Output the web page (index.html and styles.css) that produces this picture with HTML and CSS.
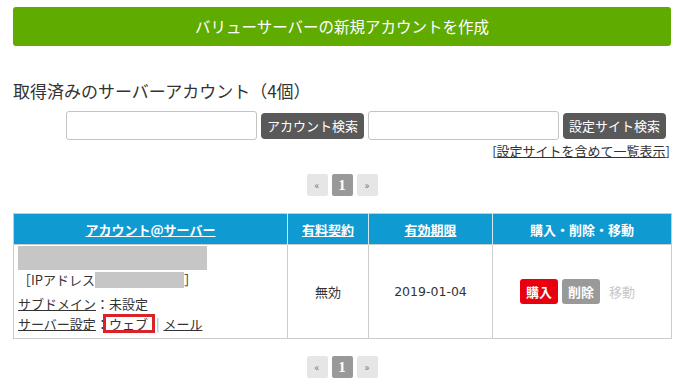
FILE: index.html
```html
<!DOCTYPE html>
<html lang="ja">
<head>
<meta charset="utf-8">
<link rel="stylesheet" href="styles.css">
</head>
<body>
<div class="page">
  <div class="create-btn">バリューサーバーの新規アカウントを作成</div>

  <h2 class="title">取得済みのサーバーアカウント（4個）</h2>

  <div class="search-row">
    <input class="search-input" type="text">
    <span class="btn-dark">アカウント検索</span>
    <input class="search-input" type="text">
    <span class="btn-dark">設定サイト検索</span>
  </div>
  <div class="list-link">[<a href="#">設定サイトを含めて一覧表示</a>]</div>

  <div class="pager">
    <span class="pg">«</span><span class="pg active">1</span><span class="pg">»</span>
  </div>

  <table class="accounts">
    <thead>
      <tr>
        <th class="c1"><a href="#">アカウント@サーバー</a></th>
        <th class="c2"><a href="#">有料契約</a></th>
        <th class="c3"><a href="#">有効期限</a></th>
        <th class="c4">購入・削除・移動</th>
      </tr>
    </thead>
    <tbody>
      <tr>
        <td class="acct">
          <div class="redact-a"></div>
          <div class="ip-line">［IPアドレス<span class="redact-b"></span>］</div>
          <div class="info-line sub"><a href="#">サブドメイン</a>：未設定</div>
          <div class="info-line"><a href="#">サーバー設定</a>：<span class="mark"><a href="#">ウェブ</a></span><span class="sep">|</span><a href="#">メール</a></div>
        </td>
        <td class="center">無効</td>
        <td class="center date">2019-01-04</td>
        <td class="center">
          <div class="actions">
            <span class="btn-red">購入</span><span class="btn-gray">削除</span><span class="btn-off">移動</span>
          </div>
        </td>
      </tr>
    </tbody>
  </table>

  <div class="pager bottom">
    <span class="pg">«</span><span class="pg active">1</span><span class="pg">»</span>
  </div>
</div>
</body>
</html>
```

FILE: styles.css
```css
* { box-sizing: border-box; }
html, body { margin: 0; padding: 0; background: #fff; }
body {
  font-family: "Noto Sans CJK JP", "Noto Sans", sans-serif;
  color: #333;
  font-size: 13px;
}
.page {
  width: 658px;
  margin-left: 13px;
  padding-top: 7px;
}
.create-btn {
  height: 39px;
  background: #5fab00;
  border-radius: 3px;
  color: #fff;
  font-size: 15.5px;
  line-height: 39px;
  text-align: center;
}
.title {
  margin: 33px 0 0;
  font-size: 17px;
  font-weight: normal;
  line-height: 24px;
  color: #333;
}
.search-row {
  margin-top: 8px;
  display: flex;
  align-items: center;
  justify-content: flex-end;
  gap: 4px;
  padding-right: 5px;
}
.search-input {
  width: 191px;
  height: 29px;
  margin: 0;
  border: 1px solid #c4c4c4;
  border-radius: 3px;
  background: #fff;
}
.btn-dark {
  display: inline-block;
  height: 26px;
  line-height: 26px;
  padding: 0 6px;
  background: #595959;
  color: #fff;
  border-radius: 4px;
  font-size: 13px;
}
.list-link {
  margin-top: 2px;
  text-align: right;
  padding-right: 1px;
  font-size: 13px;
  line-height: 18px;
  color: #333;
}
.list-link a { color: #333; }
.pager {
  margin-top: 14px;
  display: flex;
  justify-content: center;
  gap: 4px;
}
.pg {
  width: 21px;
  height: 22px;
  background: #e6e6e6;
  border-radius: 2px;
  color: #777;
  font-size: 10px;
  line-height: 22px;
  text-align: center;
}
.pg.active {
  background: #999;
  color: #fff;
  font-family: "Liberation Serif", serif;
  font-weight: bold;
  font-size: 15px;
}
.accounts {
  margin-top: 17px;
  width: 658px;
  border-collapse: collapse;
  table-layout: fixed;
  border: 1px solid #ccc;
}
.accounts th {
  height: 31px;
  background: #0f9ad1;
  color: #fff;
  font-size: 13px;
  font-weight: bold;
  padding: 0;
  border-right: 1px solid #d4e8f2;
  text-align: center;
}
.accounts th:last-child { border-right: none; }
.accounts th a { color: #fff; }
.c1 { width: 274px; }
.c2 { width: 81px; }
.c3 { width: 124px; }
.c4 { width: 179px; }
.accounts td {
  border: 1px solid #ccc;
  vertical-align: middle;
  padding: 0;
  font-size: 13px;
}
.accounts td.acct {
  padding: 1px 4px 4px;
  text-align: left;
}
.center { text-align: center; }
.accounts td.date {
  font-family: "DejaVu Sans", sans-serif;
  font-size: 12.5px;
}
.redact-a {
  width: 189px;
  height: 24px;
  background: #c6c6c6;
}
.ip-line {
  line-height: 20px;
  display: flex;
  align-items: center;
}
.redact-b {
  display: inline-block;
  width: 89px;
  height: 16px;
  background: #c6c6c6;
}
.info-line {
  line-height: 20px;
}
.info-line.sub { margin-top: 4px; }
.info-line a { color: #333; }
.mark {
  position: relative;
}
.mark::after {
  content: "";
  position: absolute;
  left: -6px;
  right: -7px;
  top: 0;
  bottom: 0;
  border: 3px solid #d8232a;
}
.sep {
  color: #aaa;
  margin: 0 4px 0 8px;
}
.actions {
  display: flex;
  justify-content: center;
  align-items: center;
  gap: 4px;
  padding-right: 4px;
}
.btn-red, .btn-gray {
  display: inline-block;
  height: 25px;
  line-height: 25px;
  padding: 0 6px;
  color: #fff;
  font-weight: bold;
  border-radius: 3px;
}
.btn-red { background: #e8000f; }
.btn-gray { background: #999; }
.btn-off {
  color: #c8c8c8;
  padding: 0 5px;
}
.pager.bottom { margin-top: 17px; }
```
